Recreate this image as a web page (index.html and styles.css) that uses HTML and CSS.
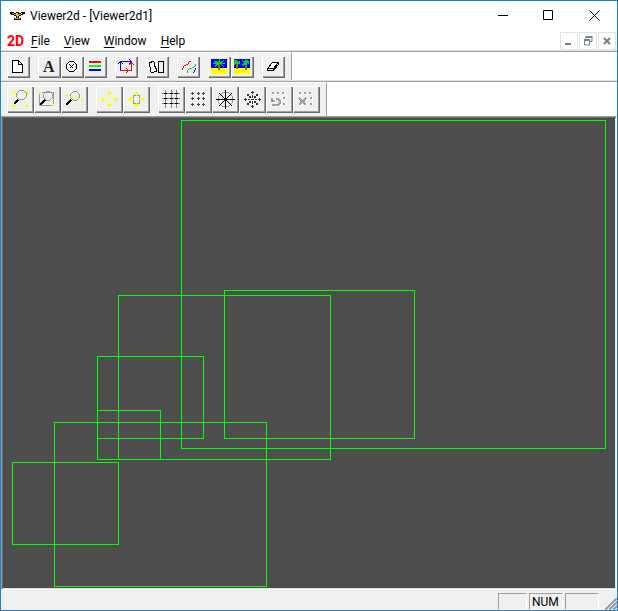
FILE: index.html
```html
<!DOCTYPE html>
<html lang="en">
<head>
  <meta charset="UTF-8" />
  <meta name="viewport" content="width=device-width, initial-scale=1.0" />
  <title>Viewer2d - [Viewer2d1]</title>
  <link rel="stylesheet" href="styles.css">
</head>
<body>

<div class="window">

  <!-- Title bar -->
  <header class="titlebar">
    <svg class="app-icon" width="16" height="16" shape-rendering="crispEdges">
      <path d="M0 4h4v1h2v-1h3v1h2v-1h4v2h-2v1h-2v1h-2v2h2v2h-7v-2h2v-2h-2v-1h-3v-1h-1v-1h-1z" fill="#000"/>
      <path d="M2 5h2v1h-2zM4 6h7v1h-7zM6 7h3v1h-3zM7 8h1v2h-1zM5 10h5v1h-5z" fill="#d0a000"/>
      <path d="M6 5h2v1h-2zM11 5h1v1h-1zM7 7h1v1h-1z" fill="#fff080"/>
    </svg>
    <span class="title">Viewer2d - [Viewer2d1]</span>
    <button class="caption-btn" aria-label="Minimize"><svg width="11" height="11"><path d="M1 5.500h10"/></svg></button>
    <button class="caption-btn" aria-label="Maximize"><svg width="11" height="11"><path d="M.5.5h9v9h-9z"/></svg></button>
    <button class="caption-btn" aria-label="Close"><svg width="11" height="11"><path d="M.5.5l10 10M10.500.5l-10 10"/></svg></button>
  </header>

  <!-- Menu -->
  <nav class="menubar">
    <span class="doc-icon">2D</span>
    <a href="#"><u>F</u>ile</a>
    <a href="#"><u>V</u>iew</a>
    <a href="#"><u>W</u>indow</a>
    <a href="#"><u>H</u>elp</a>
    <div class="child-btns">
      <button aria-label="Minimize child"><svg width="16" height="16"><path d="M4 11h6" stroke-width="2"/></svg></button>
      <button aria-label="Restore child"><svg width="16" height="16"><path d="M6 5.500v-1h6v4h-2M4.500 7v5h5v-5"/><path d="M5.500 4h7M4 7h6" stroke-width="2"/></svg></button>
      <button aria-label="Close child"><svg width="16" height="16"><path d="M5 5l6 6M11 5l-6 6" stroke-width="2"/></svg></button>
    </div>
  </nav>

  <!-- File / view toolbar -->
  <div class="toolbar-row">
    <div class="toolbar small">
      <div class="group">
        <button aria-label="New"><svg><path d="M5.500 4.500h6l4 4v8h-10zM11.500 4.500v4h4" fill="#fff" stroke="#000"/></svg></button>
      </div>
      <div class="group">
        <button aria-label="Text"><svg><text x="5" y="16" class="letter">A</text></svg></button>
        <button aria-label="Marker"><svg><path d="M8.500 5.500h4l3 3v4l-3 3h-4l-3-3v-4zM8.500 8.500l4 4M12.500 8.500l-4 4" stroke="#000"/></svg></button>
        <button aria-label="Lines"><svg><path d="M5 6h12" stroke="#f00" stroke-width="2"/><path d="M5 10h12" stroke="#0f0" stroke-width="2"/><path d="M5 14h12" stroke="#00f" stroke-width="2"/></svg></button>
      </div>
      <div class="group">
        <button aria-label="Polyline"><svg><path d="M5 5h12v1h-12zM5 5h1v9h-1zM4 6h3v1h-3zM3 7h1v1h-1zM7 7h1v1h-1zM15 4h1v3h-1zM14 3h1v1h-1zM14 7h1v1h-1z" fill="#00f"/><path d="M5 14h11v1h-11zM16 6h1v9h-1zM15 7h3v1h-3zM14 8h1v1h-1zM18 8h1v1h-1zM12 13h1v3h-1zM11 12h1v1h-1zM11 16h1v1h-1z" fill="#f00"/></svg></button>
      </div>
      <div class="group">
        <button aria-label="Shapes"><svg><path d="M3.500 6.500l4-1 1 1v3l2 4v2l-5 1-1-1v-3l-1-3zM12.500 5.500h5v11h-5z" stroke="#000"/></svg></button>
      </div>
      <div class="group">
        <button aria-label="Curves"><svg><path d="M5 12h1v2h-1zM6 10h1v2h-1zM7 9h2v1h-2zM9 8h2v1h-2zM11 6h1v2h-1zM12 5h2v1h-2z" fill="#f00"/><path d="M10 14h1v3h-1zM11 13h1v1h-1zM12 12h3v1h-3zM15 11h2v1h-2zM17 10h1v1h-1zM18 8h1v2h-1z" fill="#0d0"/><path d="M16 16h1v1h-1zM17 14h1v2h-1zM18 12h1v2h-1z" fill="#00f"/></svg></button>
      </div>
      <div class="group">
        <button aria-label="Image"><svg><path d="M3 3h16v9h-16z" fill="#00f"/><path d="M3 12h16v6h-16z" fill="#ff0"/><path d="M10 8h2v6h-2z" fill="#960"/><path d="M5 5h4l1 2 1-4 1 1v2l4-2v1l-3 2h4v1h-4l3 2-1 1-3-3-2 1-3 2-1-1 2-2h-3v-1h3z" fill="#0d0"/></svg></button>
        <button aria-label="Images"><svg><path d="M3 3h16v9h-16z" fill="#00f"/><path d="M3 12h16v6h-16z" fill="#ff0"/><path d="M5 8h2v5h-2zM14 8h2v6h-2z" fill="#960"/><path d="M3 4h3l1 2 2-2v4h-2v2l-2-3-2 2zM10 4l3 1 2-1 3 1v4l-2-2v4l-2-3-2 2-1-2 2-2z" fill="#0d0"/></svg></button>
      </div>
      <div class="group">
        <button aria-label="Erase"><svg><path d="M5.500 12.500l5-6h6l-5 6z" fill="#fff" stroke="#000"/><path d="M5.500 12.500v2h6l5-6v-2M11.500 12.500v2" stroke="#000"/></svg></button>
      </div>
    </div>
  </div>

  <!-- Zoom / grid toolbar -->
  <div class="toolbar-row">
    <div class="toolbar large">
      <div class="group">
        <button aria-label="Fit all"><svg><path d="M12.500 4.500h4l3 3v3l-3 3h-4l-3-3v-3z" stroke="#999"/><path d="M11 14l-4 4" stroke="#000" stroke-width="2"/><path d="M9 9l-4-4M5.500 9v-3.500h4M18 8l3-3M17.500 5.500h3v3M17 17l4 4M17.500 20.500h3v-3M8 18l-3 3M5.500 17v3.500h3" stroke="#ff0"/></svg></button>
        <button aria-label="Zoom window"><svg><path d="M5.500 7v12.500h12M8 6.500h11.500v11M12.500 5.500h3l3 3v3l-3 3h-3l-3-3v-3z" stroke="#999"/><path d="M11 14l-5 5" stroke="#000" stroke-width="2"/><path d="M4 6h3v1h-3zM5 5h1v3h-1zM18 19h3v1h-3zM19 18h1v3h-1z" fill="#ff0"/></svg></button>
        <button aria-label="Zoom"><svg><path d="M12.500 5.500h3l3 3v3l-3 3h-3l-3-3v-3z" stroke="#999"/><path d="M10 14l-5 5" stroke="#000" stroke-width="2"/><path d="M4 9h3v1h-3zM9 10h3v1h-3zM13 11h3v1h-3zM20 13h3v1h-3zM21 12h1v3h-1z" fill="#ff0"/></svg></button>
      </div>
      <div class="group">
        <button aria-label="Pan"><svg class="arrows"><path d="M13 5h1v5h-1zM12 6h3v1h-3zM11 7h5v1h-5zM13 16h1v5h-1zM12 19h3v1h-3zM11 18h5v1h-5zM5 13h6v1h-6zM6 12h1v3h-1zM7 11h1v5h-1zM16 13h6v1h-6zM20 12h1v3h-1zM19 11h1v5h-1z"/></svg></button>
        <button aria-label="Global pan"><svg class="arrows"><path d="M10.500 9.500h6v8h-6z" class="frame"/><path d="M13 5h1v5h-1zM12 6h3v1h-3zM11 7h5v1h-5zM13 16h1v5h-1zM12 19h3v1h-3zM11 18h5v1h-5zM5 13h6v1h-6zM6 12h1v3h-1zM7 11h1v5h-1zM16 13h6v1h-6zM20 12h1v3h-1zM19 11h1v5h-1z"/></svg></button>
      </div>
      <div class="group">
        <button aria-label="Rectangular grid lines"><svg><path d="M4 7.500h18M4 12.500h18M4 17.500h18M7.500 4v18M13.500 4v18M18.500 4v18" stroke="#808080"/><path d="M6 7.500h3M12 7.500h3M17 7.500h3M6 12.500h3M12 12.500h3M17 12.500h3M6 17.500h3M12 17.500h3M17 17.500h3" stroke="#000"/></svg></button>
        <button aria-label="Rectangular grid points"><svg><path d="M6 7h3v1h-3zM7 6h1v3h-1zM12 7h3v1h-3zM13 6h1v3h-1zM17 7h3v1h-3zM18 6h1v3h-1zM6 12h3v1h-3zM7 11h1v3h-1zM12 12h3v1h-3zM13 11h1v3h-1zM17 12h3v1h-3zM18 11h1v3h-1zM6 18h3v1h-3zM7 17h1v3h-1zM12 18h3v1h-3zM13 17h1v3h-1zM17 18h3v1h-3zM18 17h1v3h-1z" fill="#444"/></svg></button>
        <button aria-label="Circular grid lines"><svg><path d="M10.500 6.500h6l4 4v6l-4 4h-6l-4-4v-6z" stroke="#999"/><path d="M4 13.500h19M13.500 4v19M7 7l13 13M20 7l-13 13" stroke="#000"/></svg></button>
        <button aria-label="Circular grid points"><svg><path d="M13 5h1v3h-1zM12 6h3v1h-3zM13 19h1v3h-1zM12 20h3v1h-3zM5 13h3v1h-3zM6 12h1v3h-1zM19 13h3v1h-3zM20 12h1v3h-1zM8 8h2v2h-2zM17 8h2v2h-2zM8 17h2v2h-2zM17 17h2v2h-2zM10 10h2v2h-2zM13 9h1v3h-1zM15 10h2v2h-2zM9 13h2v1h-2zM12 13h3v1h-3zM16 13h2v1h-2zM10 15h2v2h-2zM13 15h1v3h-1zM15 15h2v2h-2z" fill="#333"/></svg></button>
        <button aria-label="Grid values" disabled><svg><path class="emboss" d="M7 8h2M12 8h2M17 8h2M18 13h2M18 18h2M7 13v3h3M8 20h5l2-2v-2l-2-2h-2"/><path class="dim" d="M6 7h2M11 7h2M16 7h2M17 12h2M17 18h2M6 12v3h3M6 19h6l2-2v-2l-2-2h-2"/></svg></button>
        <button aria-label="Grid off" disabled><svg><path class="emboss" d="M7 8h2M12 8h2M17 8h2M18 13h2M18 18h2M7 13l7 7M14 13l-7 7"/><path class="dim" d="M6 7h2M11 7h2M16 7h2M17 12h2M17 18h2M6 12l7 7M13 12l-7 7M7 15h5"/></svg></button>
      </div>
    </div>
  </div>

  <!-- Drawing -->
  <main class="view">
    <svg width="100%" height="100%">
      <rect x="178.500" y="2.500" width="424" height="328"/>
      <rect x="115.500" y="177.500" width="212" height="164"/>
      <rect x="221.500" y="172.500" width="190" height="148"/>
      <rect x="94.500" y="238.500" width="106" height="82"/>
      <rect x="94.500" y="292.500" width="63" height="49"/>
      <rect x="51.500" y="304.500" width="212" height="164"/>
      <rect x="9.500" y="344.500" width="106" height="82"/>
    </svg>
  </main>

  <footer class="statusbar">
    <span class="pane"></span>
    <span class="pane wide">NUM</span>
    <span class="pane wide"></span>
    <svg class="grip" width="12" height="12"><path d="M0 12l12-12M4 12l8-8M8 12l4-4"/></svg>
  </footer>

</div>

</body>
</html>
```
FILE: styles.css
```css
* {
  box-sizing: border-box;
}
body {
  margin: 0;
  font-family: Roboto, "Noto Sans", sans-serif;
  font-size: 12px;
  line-height: 16px;
  color: #000;
}
button {
  padding: 0;
  border: none;
  background: none;
}
svg {
  display: block;
  fill: none;
}

.window {
  display: flex;
  flex-direction: column;
  height: 100vh;
  border: 1px solid #1883d7;
  background: #fff;
}

/* title bar */
.titlebar {
  display: flex;
  align-items: center;
  height: 29px;
}
.app-icon {
  margin: 0 4px 0 9px;
}
.title {
  flex: 1;
}
.caption-btn {
  display: flex;
  align-items: center;
  justify-content: center;
  width: 46px;
  height: 29px;
}
.caption-btn svg {
  stroke: #000;
}

/* menu */
.menubar {
  display: flex;
  align-items: center;
  height: 21px;
  padding: 0 1px 0 6px;
}
.menubar a {
  color: #000;
  text-decoration: none;
  margin-right: 14px;
}
.menubar u {
  text-underline-offset: 2px;
}
.doc-icon {
  width: 24px;
  font-size: 14px;
  font-weight: bold;
  color: #f00;
}
.child-btns {
  display: flex;
  gap: 1px;
  margin-left: auto;
}
.child-btns button {
  width: 18px;
  height: 18px;
  border: 1px solid #e3e3e3;
}
.child-btns svg {
  stroke: #708090;
}

/* toolbars */
.toolbar-row {
  display: flex;
  border-top: 1px solid #a0a0a0;
  box-shadow: 0 -1px #e3e3e3;
}
.toolbar {
  display: flex;
  gap: 8px;
  background: #f0f0f0;
  padding: 3px 6px;
  border-top: 1px solid #fff;
  border-right: 1px solid #a0a0a0;
}
.group {
  display: flex;
}
.small button,
.small svg {
  width: 23px;
  height: 22px;
}
.large button,
.large svg {
  width: 27px;
  height: 27px;
}
.toolbar button {
  background: #f0f0f0;
  box-shadow: inset 1px 1px #fff, inset -1px -1px #696969, inset -2px -2px #a0a0a0;
}
.toolbar svg {
  shape-rendering: crispEdges;
}
.letter {
  font-family: "Liberation Serif", serif;
  font-size: 16px;
  font-weight: bold;
  fill: #222;
}
.arrows {
  fill: #ff0;
}
.frame {
  fill: none;
  stroke: #999;
}
.emboss {
  stroke: #fff;
  stroke-width: 2px;
}
.dim {
  stroke: #a0a0a0;
  stroke-width: 2px;
}

/* drawing area */
.view {
  flex: 1;
  min-height: 0;
  background: #4d4d4d;
  border: 1px solid #a0a0a0;
  border-right-color: #fff;
  border-bottom-color: #fff;
  box-shadow: inset 1px 1px #696969, inset -1px -1px #e3e3e3;
  padding: 1px;
}
.view svg {
  stroke: #0f0;
}

.statusbar {
  display: flex;
  justify-content: flex-end;
  align-items: flex-end;
  gap: 2px;
  height: 20px;
  background: #f0f0f0;
}
.pane {
  width: 29px;
  height: 17px;
  padding-left: 2px;
  border: 1px solid #a0a0a0;
  border-right-color: #fff;
  border-bottom-color: #fff;
}
.wide {
  width: 34px;
}
.grip {
  margin-left: 4px;
  stroke: #a0a0a0;
  stroke-width: 2px;
  shape-rendering: crispEdges;
}
```
